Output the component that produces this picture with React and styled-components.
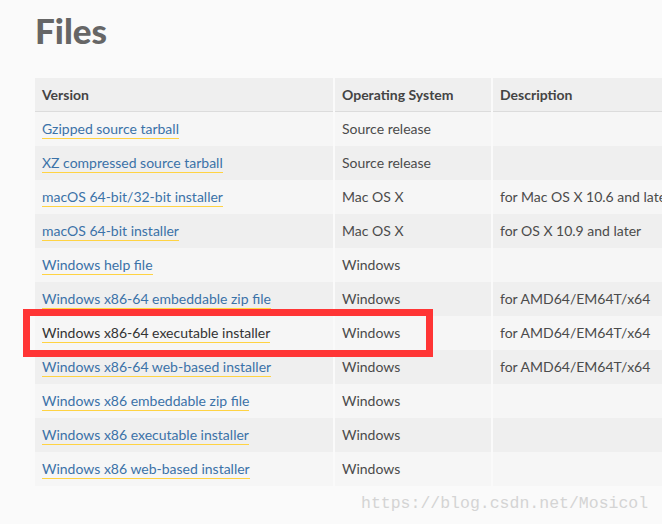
import React from 'react';
import styled, {createGlobalStyle} from 'styled-components';

const GlobalStyle = createGlobalStyle`
    html, body {
        margin: 0;
        padding: 0;
        background: #fafafa;
        overflow: hidden;
    }
    body {
        font-family: Lato, "Open Sans", sans-serif;
    }
`

const Page = styled.div`
    position: relative;
    width: 662px;
    height: 524px;
    padding: 0 0 0 35px;
    box-sizing: border-box;
    overflow: hidden;
`

const Title = styled.h1`
    margin: 0;
    padding-top: 8px;
    height: 78px;
    box-sizing: border-box;
    font-size: 35px;
    font-weight: 900;
    line-height: 44px;
    color: #666;
`

const TableWrap = styled.div`
    position: relative;
    width: 720px;
`

const Table = styled.table`
    border-collapse: collapse;
    width: 720px;
    table-layout: fixed;
    font-size: 14px;
`

const Th = styled.th`
    box-sizing: border-box;
    width: ${p => p.width}px;
    height: 33px;
    padding: 0 7px;
    text-align: left;
    font-weight: 700;
    color: #444;
    background: #efefef;
    border-bottom: 1px solid #dcdcdc;
    & + & {
        border-left: 2px solid #fafafa;
    }
`

const Tr = styled.tr`
    background: ${p => p.odd ? '#f6f6f6' : '#efefef'};
`

const Td = styled.td`
    height: 34px;
    padding: 0 7px;
    color: #4b4b4b;
    white-space: nowrap;
    overflow: hidden;
    & + & {
        border-left: 2px solid #fafafa;
    }
`

const Link = styled.span`
    color: ${p => p.active ? '#333' : '#3b72a8'};
    border-bottom: 1px solid #ffd343;
    padding-bottom: 1px;
`

const Highlight = styled.div`
    position: absolute;
    left: -12px;
    top: 231px;
    width: 396px;
    height: 34px;
    border: 7px solid #ff3535;
    pointer-events: none;
`

const Watermark = styled.div`
    position: absolute;
    left: 361px;
    top: 494px;
    font-family: "Liberation Mono", monospace;
    font-size: 16.5px;
    color: #d4d4d4;
`

const files = [
    ['Gzipped source tarball', 'Source release', ''],
    ['XZ compressed source tarball', 'Source release', ''],
    ['macOS 64-bit/32-bit installer', 'Mac OS X', 'for Mac OS X 10.6 and later'],
    ['macOS 64-bit installer', 'Mac OS X', 'for OS X 10.9 and later'],
    ['Windows help file', 'Windows', ''],
    ['Windows x86-64 embeddable zip file', 'Windows', 'for AMD64/EM64T/x64'],
    ['Windows x86-64 executable installer', 'Windows', 'for AMD64/EM64T/x64'],
    ['Windows x86-64 web-based installer', 'Windows', 'for AMD64/EM64T/x64'],
    ['Windows x86 embeddable zip file', 'Windows', ''],
    ['Windows x86 executable installer', 'Windows', ''],
    ['Windows x86 web-based installer', 'Windows', '']
];

const App = () => (
    <Page>
        <GlobalStyle/>
        <Title>Files</Title>
        <TableWrap>
            <Table>
                <thead>
                    <tr>
                        <Th width={299}>Version</Th>
                        <Th width={158}>Operating System</Th>
                        <Th width={263}>Description</Th>
                    </tr>
                </thead>
                <tbody>
                    {files.map(([name, os, desc], i) =>
                        <Tr key={name} odd={i % 2 === 0}>
                            <Td><Link active={i === 6}>{name}</Link></Td>
                            <Td>{os}</Td>
                            <Td>{desc}</Td>
                        </Tr>)}
                </tbody>
            </Table>
            <Highlight/>
        </TableWrap>
        <Watermark>https://blog.csdn.net/Mosicol</Watermark>
    </Page>
);

export default App;
